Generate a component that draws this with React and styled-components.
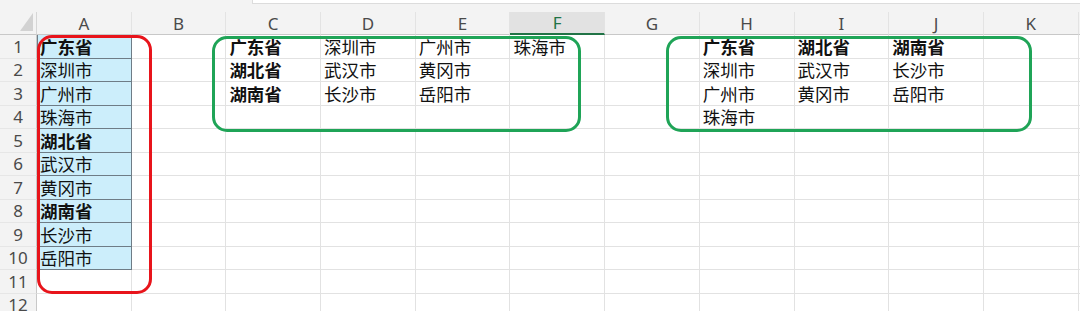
import React from 'react'
import styled, { createGlobalStyle } from 'styled-components'

const COLS = ['A', 'B', 'C', 'D', 'E', 'F', 'G', 'H', 'I', 'J', 'K']
const ROWS = 12
const COL_W = 94.7
const ROW_H = 23.5

// cell contents, key "C1" -> { t, b }
const cells = {}
const put = (col, row, t, b) => { cells[col + row] = { t, b } }

const listA = [
    ['广东省', true], ['深圳市'], ['广州市'], ['珠海市'],
    ['湖北省', true], ['武汉市'], ['黄冈市'],
    ['湖南省', true], ['长沙市'], ['岳阳市']
]
listA.forEach(([t, b], i) => put('A', i + 1, t, b))

const wide = [
    ['广东省', '深圳市', '广州市', '珠海市'],
    ['湖北省', '武汉市', '黄冈市'],
    ['湖南省', '长沙市', '岳阳市']
]
wide.forEach((r, ri) => r.forEach((t, ci) => put(COLS[2 + ci], ri + 1, t, ci === 0)))

const tall = [
    ['广东省', '深圳市', '广州市', '珠海市'],
    ['湖北省', '武汉市', '黄冈市'],
    ['湖南省', '长沙市', '岳阳市']
]
tall.forEach((c, ci) => c.forEach((t, ri) => put(COLS[7 + ci], ri + 1, t, ri === 0)))

export default function App() {
    return (
        <>
            <GlobalStyle />
            <Window>
                <TopStrip>
                    <FormulaEdge />
                </TopStrip>
                <Sheet>
                    <Grid>
                        <Corner>
                            <CornerMark />
                        </Corner>
                        {COLS.map(c => (
                            <ColHead key={c} $active={c === 'F'}>{c}</ColHead>
                        ))}
                        <ColHead />
                        {Array.from({ length: ROWS }, (_, i) => i + 1).map(r => (
                            <React.Fragment key={r}>
                                <RowHead>{r}</RowHead>
                                {COLS.map(c => {
                                    const cell = cells[c + r]
                                    return (
                                        <Cell key={c} $filled={c === 'A' && r <= 10} $bold={cell && cell.b}>
                                            {cell ? cell.t : ''}
                                        </Cell>
                                    )
                                })}
                                <Cell />
                            </React.Fragment>
                        ))}
                    </Grid>
                    <Ring $color="#e8141b" style={{ left: 37, top: 23, width: 115, height: 259 }} />
                    <Ring $color="#1fa457" style={{ left: 212, top: 24, width: 369, height: 96 }} />
                    <Ring $color="#1fa457" style={{ left: 666, top: 24, width: 366, height: 96 }} />
                </Sheet>
            </Window>
        </>
    )
}

const GlobalStyle = createGlobalStyle`
    html, body { margin:0; padding:0; background:#ffffff; }
    body { font-family:"Noto Sans", "Noto Sans CJK SC", sans-serif; }
`;
const Window = styled.div`
    width:1080px;
    height:311px;
    overflow:hidden;
    background:#f3f3f3;
`;
const TopStrip = styled.div`
    height:12px;
    display:flex;
    background:#f3f3f3;
`;
const FormulaEdge = styled.div`
    margin-left:252px;
    flex:1;
    height:3px;
    background:#ffffff;
    border-bottom:1px solid #dcdcdc;
    border-left:1px solid #dcdcdc;
`;
const Sheet = styled.div`
    position:relative;
`;
const Grid = styled.div`
    display:grid;
    grid-template-columns: 37px repeat(${COLS.length}, ${COL_W}px) 1fr;
    grid-template-rows: 23px repeat(${ROWS}, ${ROW_H}px);
    background:#ffffff;
`;
const Corner = styled.div`
    display:flex;
    align-items:flex-end;
    justify-content:flex-end;
    padding:0 3px 3px 0;
    background:#f3f3f3;
    border-bottom:1px solid #c8c8c8;
    border-right:1px solid #d6d6d6;
`;
const CornerMark = styled.div`
    width:0;
    height:0;
    border-left:13px solid transparent;
    border-bottom:18px solid #d2d2d2;
`;
const ColHead = styled.div`
    display:flex;
    align-items:center;
    justify-content:center;
    font-family:"Noto Sans", sans-serif;
    font-size:17px;
    color:${p => p.$active ? '#217346' : '#4a4a4a'};
    background:${p => p.$active ? '#e2e2e2' : '#f3f3f3'};
    border-right:1px solid #e3e3e3;
    border-bottom:${p => p.$active ? '2px solid #217346' : '1px solid #c8c8c8'};
    box-sizing:border-box;
`;
const RowHead = styled.div`
    display:flex;
    align-items:center;
    justify-content:center;
    font-family:"Noto Sans", sans-serif;
    font-size:17px;
    color:#4a4a4a;
    background:#f3f3f3;
    border-right:1px solid #c8c8c8;
    border-bottom:1px solid #e6e6e6;
    box-sizing:border-box;
`;
const Cell = styled.div`
    display:flex;
    align-items:center;
    padding-left:3px;
    box-sizing:border-box;
    white-space:nowrap;
    overflow:visible;
    font-family:"Noto Sans CJK SC", sans-serif;
    font-size:17.5px;
    font-weight:${p => p.$bold ? 700 : 400};
    color:#111111;
    background:${p => p.$filled ? '#cceefb' : '#ffffff'};
    border-right:1px solid ${p => p.$filled ? '#6e7c86' : '#e2e2e2'};
    border-bottom:1px solid ${p => p.$filled ? '#6e7c86' : '#e2e2e2'};
    box-shadow:${p => p.$filled ? 'inset 1px 0 0 #6e7c86' : 'none'};
`;
const Ring = styled.div`
    position:absolute;
    box-sizing:border-box;
    border:3px solid ${p => p.$color};
    border-radius:15px;
    pointer-events:none;
`;
